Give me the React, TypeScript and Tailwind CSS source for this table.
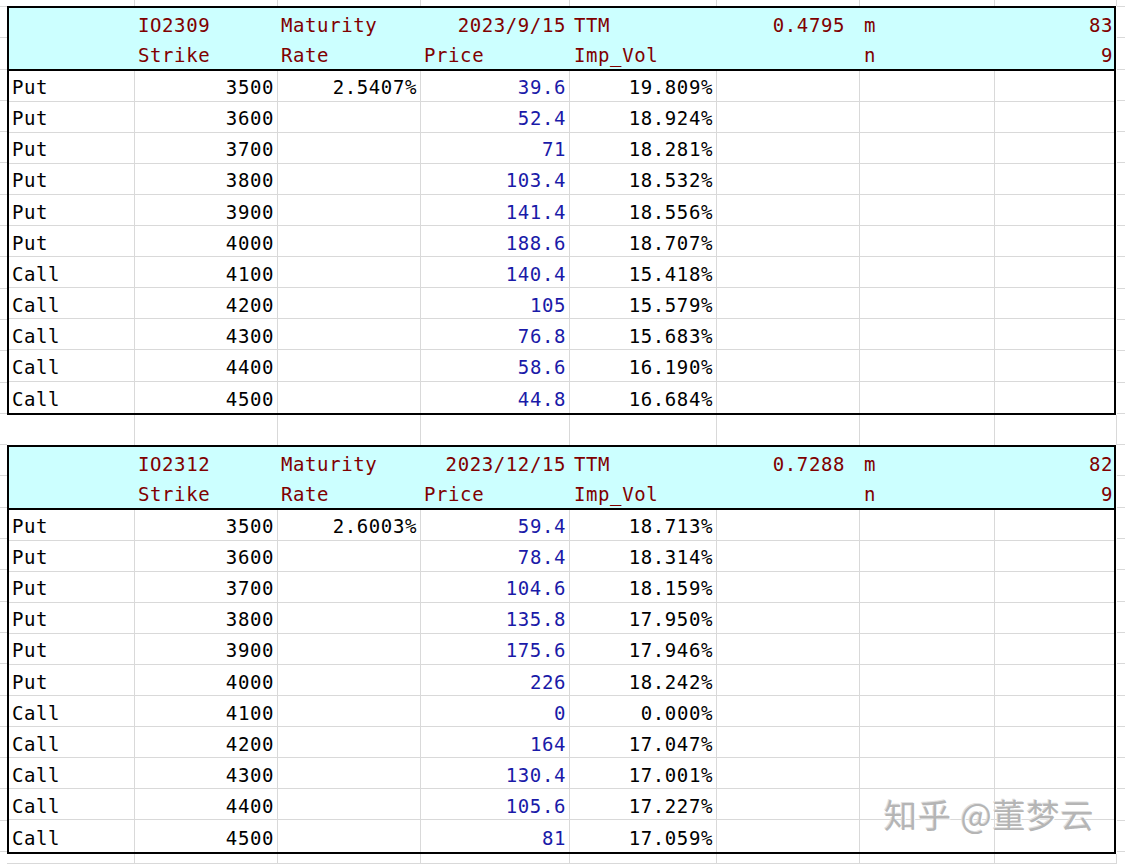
import React from "react";

const OUT = ["w-[128px]", "w-[143px]", "w-[143px]", "w-[149px]", "w-[147px]", "w-[143px]", "w-[135px]", "w-[122px]"];
const IN = ["w-[126px]", "w-[143px]", "w-[143px]", "w-[149px]", "w-[147px]", "w-[143px]", "w-[135px]", "w-[119px]"];

type Row = [string, string, string, string, string];

const t1: Row[] = [
  ["Put", "3500", "2.5407%", "39.6", "19.809%"],
  ["Put", "3600", "", "52.4", "18.924%"],
  ["Put", "3700", "", "71", "18.281%"],
  ["Put", "3800", "", "103.4", "18.532%"],
  ["Put", "3900", "", "141.4", "18.556%"],
  ["Put", "4000", "", "188.6", "18.707%"],
  ["Call", "4100", "", "140.4", "15.418%"],
  ["Call", "4200", "", "105", "15.579%"],
  ["Call", "4300", "", "76.8", "15.683%"],
  ["Call", "4400", "", "58.6", "16.190%"],
  ["Call", "4500", "", "44.8", "16.684%"],
];

const t2: Row[] = [
  ["Put", "3500", "2.6003%", "59.4", "18.713%"],
  ["Put", "3600", "", "78.4", "18.314%"],
  ["Put", "3700", "", "104.6", "18.159%"],
  ["Put", "3800", "", "135.8", "17.950%"],
  ["Put", "3900", "", "175.6", "17.946%"],
  ["Put", "4000", "", "226", "18.242%"],
  ["Call", "4100", "", "0", "0.000%"],
  ["Call", "4200", "", "164", "17.047%"],
  ["Call", "4300", "", "130.4", "17.001%"],
  ["Call", "4400", "", "105.6", "17.227%"],
  ["Call", "4500", "", "81", "17.059%"],
];

function StripRow({ h }: { h: string }) {
  return (
    <div className={`flex ${h}`}>
      {OUT.map((w, i) => (
        <div key={i} className={`${w} h-full border-r border-[#d9d9d9]`} />
      ))}
    </div>
  );
}

function Table({ code, date, ttm, m, rows }: { code: string; date: string; ttm: string; m: string; rows: Row[] }) {
  const cellBase = "h-full flex items-center pt-[4px] whitespace-nowrap";
  return (
    <div className="border-2 border-black w-[1109px]">
      <div className="bg-[#ccffff] border-b-2 border-black text-[#800000]">
        <div className="flex h-[30.3px]">
          <div className={`${IN[0]} ${cellBase}`} />
          <div className={`${IN[1]} ${cellBase} pl-[3px]`}>{code}</div>
          <div className={`${IN[2]} ${cellBase} pl-[3px]`}>Maturity</div>
          <div className={`${IN[3]} ${cellBase} justify-end pr-[4px]`}>{date}</div>
          <div className={`${IN[4]} ${cellBase} pl-[4px]`}>TTM</div>
          <div className={`${IN[5]} ${cellBase} justify-end pr-[15px]`}>{ttm}</div>
          <div className={`${IN[6]} ${cellBase} pl-[4px]`}>m</div>
          <div className={`${IN[7]} ${cellBase} justify-end pr-[1px]`}>{m}</div>
        </div>
        <div className="flex h-[30.3px]">
          <div className={`${IN[0]} ${cellBase}`} />
          <div className={`${IN[1]} ${cellBase} pl-[3px]`}>Strike</div>
          <div className={`${IN[2]} ${cellBase} pl-[3px]`}>Rate</div>
          <div className={`${IN[3]} ${cellBase} pl-[3px]`}>Price</div>
          <div className={`${IN[4]} ${cellBase} pl-[4px]`}>Imp_Vol</div>
          <div className={`${IN[5]} ${cellBase}`} />
          <div className={`${IN[6]} ${cellBase} pl-[4px]`}>n</div>
          <div className={`${IN[7]} ${cellBase} justify-end pr-[1px]`}>9</div>
        </div>
      </div>
      {rows.map((r, ri) => (
        <div
          key={ri}
          className={`flex h-[31.1px] ${ri < rows.length - 1 ? "border-b border-[#d9d9d9]" : ""}`}
        >
          <div className={`${IN[0]} ${cellBase} pl-[3px] border-r border-[#d9d9d9] text-black`}>{r[0]}</div>
          <div className={`${IN[1]} ${cellBase} justify-end pr-[3px] border-r border-[#d9d9d9] text-black`}>{r[1]}</div>
          <div className={`${IN[2]} ${cellBase} justify-end pr-[3px] border-r border-[#d9d9d9] text-black`}>{r[2]}</div>
          <div className={`${IN[3]} ${cellBase} justify-end pr-[3px] border-r border-[#d9d9d9] text-[#1a1aa8]`}>{r[3]}</div>
          <div className={`${IN[4]} ${cellBase} justify-end pr-[3px] border-r border-[#d9d9d9] text-black`}>{r[4]}</div>
          <div className={`${IN[5]} ${cellBase} border-r border-[#d9d9d9]`} />
          <div className={`${IN[6]} ${cellBase} border-r border-[#d9d9d9]`} />
          <div className={`${IN[7]} ${cellBase}`} />
        </div>
      ))}
    </div>
  );
}

function SideStrip({ w }: { w: string }) {
  const lines = Array.from({ length: 28 });
  return (
    <div className={`${w} flex flex-col`}>
      <div className="h-[7px] border-b border-[#d9d9d9] shrink-0" />
      {lines.map((_, i) => (
        <div key={i} className="h-[31.3px] border-b border-[#d9d9d9] shrink-0" />
      ))}
    </div>
  );
}

export default function App() {
  return (
    <div className="relative w-[1125px] h-[864px] overflow-hidden bg-white font-['DejaVu_Sans_Mono',monospace] text-[19px] tracking-[0.6px] leading-none">
      <div className="flex">
        <SideStrip w="w-[7px]" />
        <div className="flex flex-col w-[1110px] shrink-0">
          <StripRow h="h-[6px]" />
          <Table code="IO2309" date="2023/9/15" ttm="0.4795" m="83" rows={t1} />
          <StripRow h="h-[30.3px]" />
          <Table code="IO2312" date="2023/12/15" ttm="0.7288" m="82" rows={t2} />
          <StripRow h="h-[10px] border-b border-[#d9d9d9]" />
          <StripRow h="h-[31px]" />
        </div>
        <SideStrip w="w-[8px]" />
      </div>
      <div className="absolute left-[884px] top-[798px] text-[33px] tracking-[1px] text-[#b5b5b5] font-['Noto_Sans_CJK_SC',sans-serif] [text-shadow:1px_1px_0_#ffffff,-1px_-1px_0_#e0e0e0] whitespace-nowrap">
        知乎 @董梦云
      </div>
    </div>
  );
}
